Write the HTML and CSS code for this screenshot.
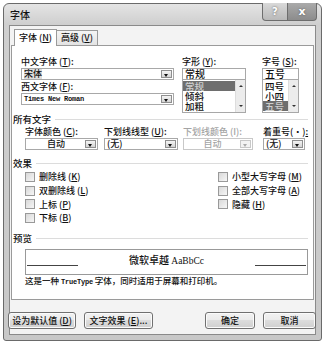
FILE: index.html
```html
<!DOCTYPE html>
<html lang="zh-CN">
<head>
<meta charset="utf-8">
<title>字体</title>
<link rel="stylesheet" href="styles.css">
</head>
<body>
<div class="window">
  <div class="titlebar">
    <span class="title">字体</span>
    <div class="caption-btns">
      <span class="cbtn help">?</span>
      <span class="cbtn close">x</span>
    </div>
  </div>

  <div class="client">
    <div class="tabs">
      <span class="tab active">字体 (<u>N</u>)</span>
      <span class="tab">高级 (<u>V</u>)</span>
    </div>

    <div class="panel">
      <!-- 字体 / 字形 / 字号 -->
      <div class="fontgrid">
        <div class="col-face">
          <div class="lbl">中文字体 (<u>T</u>):</div>
          <div class="combo"><span class="val"><span class="hl">宋体</span></span><span class="drop"></span></div>
          <div class="lbl">西文字体 (<u>F</u>):</div>
          <div class="combo"><span class="val mono">Times New Roman</span><span class="drop"></span></div>
        </div>
        <div class="col-style">
          <div class="lbl">字形 (<u>Y</u>):</div>
          <div class="edit">常规</div>
          <div class="list">
            <div class="items">
              <div class="item on">常规</div>
              <div class="item">倾斜</div>
              <div class="item">加粗</div>
            </div>
            <div class="vscroll"><span class="up"></span><span class="dn"></span></div>
          </div>
        </div>
        <div class="col-size">
          <div class="lbl">字号 (<u>S</u>):</div>
          <div class="edit">五号</div>
          <div class="list">
            <div class="items">
              <div class="item">四号</div>
              <div class="item">小四</div>
              <div class="item on">五号</div>
            </div>
            <div class="vscroll"><span class="up"></span><span class="dn"></span></div>
          </div>
        </div>
      </div>

      <!-- 所有文字 -->
      <div class="group g-all">所有文字</div>
      <div class="allrow">
        <div class="field w-color">
          <div class="lbl">字体颜色 (<u>C</u>):</div>
          <div class="combo"><span class="val center">自动</span><span class="drop"></span></div>
        </div>
        <div class="field w-uline">
          <div class="lbl">下划线线型 (<u>U</u>):</div>
          <div class="combo"><span class="val">(无)</span><span class="drop"></span></div>
        </div>
        <div class="field w-ucolor off">
          <div class="lbl">下划线颜色 (I):</div>
          <div class="combo"><span class="val center">自动</span><span class="drop"></span></div>
        </div>
        <div class="field w-emph">
          <div class="lbl">着重号(·)<u>:</u></div>
          <div class="combo"><span class="val">(无)</span><span class="drop"></span></div>
        </div>
      </div>

      <!-- 效果 -->
      <div class="group g-fx">效果</div>
      <div class="effects">
        <div class="chkcol">
          <label class="chk"><span class="box"></span>删除线 (<u>K</u>)</label>
          <label class="chk"><span class="box"></span>双删除线 (<u>L</u>)</label>
          <label class="chk"><span class="box"></span>上标 (<u>P</u>)</label>
          <label class="chk"><span class="box"></span>下标 (<u>B</u>)</label>
        </div>
        <div class="chkcol">
          <label class="chk"><span class="box"></span>小型大写字母 (<u>M</u>)</label>
          <label class="chk"><span class="box"></span>全部大写字母 (<u>A</u>)</label>
          <label class="chk"><span class="box"></span>隐藏 (<u>H</u>)</label>
        </div>
      </div>

      <!-- 预览 -->
      <div class="group g-pv">预览</div>
      <div class="preview">
        <span class="rule"></span>
        <span class="sample">微软卓越 <span class="latin">AaBbCc</span></span>
        <span class="rule"></span>
      </div>
      <div class="note">这是一种 <span class="mono">TrueType</span> 字体，同时适用于屏幕和打印机。</div>
    </div>

    <div class="footer">
      <span class="btn b-def">设为默认值 (<u>D</u>)</span>
      <span class="btn b-fx">文字效果 (<u>E</u>)...</span>
      <span class="spacer"></span>
      <span class="btn b-ok">确定</span>
      <span class="btn b-cancel">取消</span>
    </div>
  </div>
</div>
</body>
</html>
```

FILE: styles.css
```css
:root { --cjk: "Noto Sans CJK SC", "Noto Sans", sans-serif; --line: #9a9a9a }
body   { margin:0; background:#fff; font-family:var(--cjk); font-size:9px; font-weight:500; color:#111 }
u      { text-decoration:underline; text-underline-offset:1px }

.window   { margin:3px 4px 0 3px; height:338px; box-sizing:border-box; border:1px solid #6a6a6a; border-radius:6px 6px 3px 3px;
            background:linear-gradient(#e4e4e4, #cfcfcf 20px, #c8c8c8); padding:0 5px 5px 5px; display:flex; flex-direction:column }
.titlebar { height:21px; display:flex; align-items:flex-start; justify-content:space-between }
.title    { padding:3px 0 0 1px; font-size:10px }
.caption-btns { display:flex; margin-right:-1px; margin-top:-1px }
.cbtn     { height:17px; border:1px solid #6d6d6d; border-top:none; display:flex; align-items:center; justify-content:center;
            font-family:"DejaVu Sans", sans-serif; font-weight:bold; color:#fff; text-shadow:0 0 2px #555 }
.help     { width:24px; border-radius:0 0 0 4px; background:linear-gradient(#d9d9d9, #b9b9b9); font-size:10px }
.close    { width:28px; border-left:none; border-radius:0 0 4px 0; background:linear-gradient(#aaa, #8c8c8c); font-size:11px }

.client   { flex:1; background:#f3f3f3; border:1px solid #8a8a8a; padding:3px 1px 0 1px; display:flex; flex-direction:column }
.tabs     { display:flex; padding-left:3px; height:16px; align-items:flex-end }
.tab      { height:14px; line-height:14px; padding:0 4px; border:1px solid var(--line); border-bottom:none; background:linear-gradient(#f5f5f5, #e3e3e3); margin-right:-1px }
.tab.active { height:16px; line-height:16px; background:#fff; position:relative; z-index:1; margin-bottom:-1px }
.panel    { height:255px; flex:none; background:#fff; border:1px solid var(--line); padding:10px 5px 0 4px; box-sizing:border-box }

.lbl      { height:12px; line-height:12px; white-space:nowrap }
.fontgrid { display:grid; grid-template-columns:153px 64px 43px; column-gap:9px; padding-left:5px }
.col-style { margin:0 1px 0 -1px }
.col-size { margin-left:6px }
.combo    { height:10px; border:1px solid #a8a8a8; display:flex; align-items:stretch; background:#fff; margin-bottom:1px }
.val      { flex:1; line-height:10px; padding-left:2px; overflow:hidden; white-space:nowrap }
.val.center { text-align:center }
.hl       { background:#dcdcdc }
.mono     { font-family:"Liberation Mono", monospace; font-size:7px; font-weight:bold; letter-spacing:-0.2px }
.drop     { width:9px; margin:1px; border:1px solid #8f8f8f; background:linear-gradient(#f4f4f4, #d4d4d4); position:relative }
.drop::after { content:""; position:absolute; left:2px; top:3px; border:2px solid transparent; border-top:3px solid #111; border-bottom:none }
.edit     { height:10px; line-height:10px; border:1px solid #a8a8a8; padding-left:2px; font-size:10px }
.list     { height:32px; border:1px solid #a8a8a8; border-top:none; display:flex }
.items    { flex:1; padding-top:1px; overflow:hidden }
.item     { height:10px; line-height:10px; font-size:9.5px; padding-left:2px }
.item.on  { background:#6e6e6e; color:#cfcfcf }
.vscroll  { width:9px; background:#ececec; border-left:1px solid #ddd; display:flex; flex-direction:column; justify-content:space-between; align-items:center; padding:5px 0 }
.vscroll span { width:0; height:0; border:2px solid transparent }
.vscroll .up { border-bottom:2px solid #333; border-top:none }
.vscroll .dn { border-top:2px solid #333; border-bottom:none }

.group    { display:flex; align-items:center; gap:4px; height:12px; margin-left:-3px; font-size:9.5px }
.group::after { content:""; flex:1; border-top:1px solid #dcdcdc }
.g-all    { margin-top:0 }
.g-fx     { margin-top:6px }
.g-pv     { margin-top:7px }
.allrow   { display:flex; padding-left:9px; margin-top:1px }
.w-color  { width:73px; margin-right:6px }
.w-uline  { width:74px; margin-right:5px }
.w-ucolor { width:70px; margin-right:10px }
.w-emph   { width:42px }
.off      { color:#a4a4a4 }
.off .combo { border-color:#c8c8c8 }
.off .drop  { border-color:#c8c8c8; background:#f3f3f3 }
.off .drop::after { border-top-color:#aaa }

.effects  { display:flex; padding-left:9px; margin-top:1px; height:55px }
.chkcol   { width:193px; flex:none }
.chkcol + .chkcol { width:auto }
.chk      { display:flex; align-items:center; height:13.7px; white-space:nowrap }
.box      { width:8px; height:8px; border:1px solid #999; background:linear-gradient(135deg, #d8d8d8, #f6f6f6); margin-right:4px }

.preview  { margin:5px 0 0 9px; height:26px; border:1px solid #999; display:flex; align-items:center; justify-content:space-between; padding:0 1px; box-sizing:border-box }
.rule     { width:51px; border-top:1px solid #444; margin-top:6px }
.sample   { font-size:10px; margin-top:-5px }
.latin    { font-family:"Liberation Serif", serif; font-size:9.5px }
.note     { margin:0 0 0 9px; line-height:11px; font-size:8.5px }

.footer   { display:flex; align-items:flex-start; padding-top:12px; margin:0 -2px 0 -3px }
.spacer   { flex:1 }
.btn      { flex:none; box-sizing:border-box; height:17px; line-height:15px; text-align:center; border:1px solid #707070; border-radius:3px;
            background:linear-gradient(#f2f2f2, #ebebeb 45%, #dcdcdc 50%, #cfcfcf); white-space:nowrap; box-shadow:inset 0 0 0 1px #fbfbfb }
.b-def    { width:68px; margin-right:8px }
.b-fx     { width:69px }
.b-ok     { width:50px; margin-right:8px }
.b-cancel { width:53px }
```
